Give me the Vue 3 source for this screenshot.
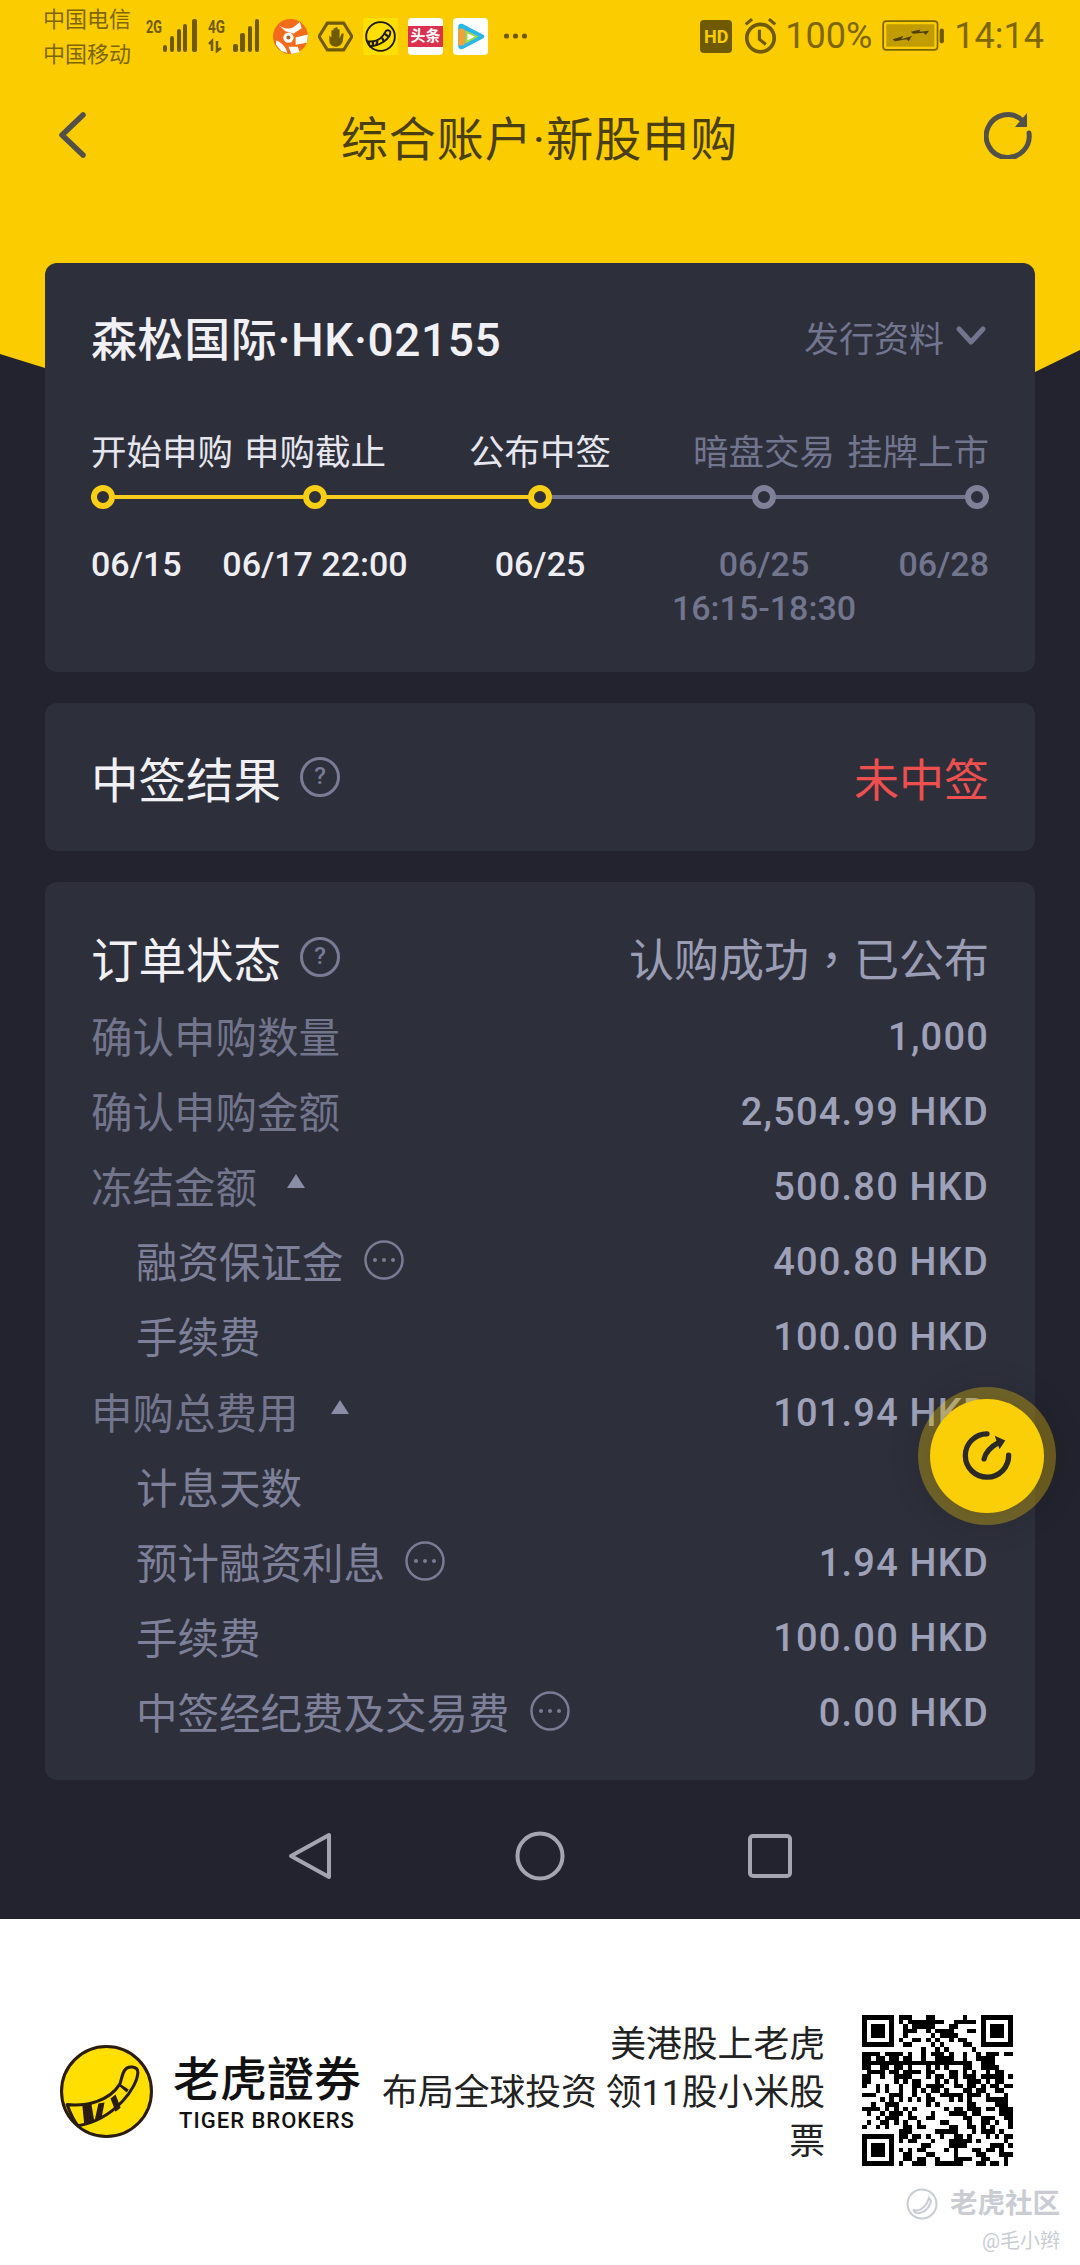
<template>
  <div class="page">
    <div class="hero-bg"></div>

    <div class="status-bar">
      <div class="carrier">
        <div>中国电信</div>
        <div>中国移动</div>
      </div>
      <svg class="signal" width="118" height="40" viewBox="0 0 114 40">
        <text x="0" y="17" class="net" textLength="16" lengthAdjust="spacingAndGlyphs">2G</text>
        <g fill="#6f5a00">
          <rect x="17" y="29" width="4" height="7" rx="2" />
          <rect x="24" y="20" width="4" height="16" rx="2" />
          <rect x="31" y="13" width="4" height="23" rx="2" />
          <rect x="37" y="8" width="4" height="28" rx="2" />
          <rect x="46" y="3" width="5" height="33" rx="2" />
        </g>
        <text x="62" y="17" class="net" textLength="17" lengthAdjust="spacingAndGlyphs">4G</text>
        <path d="M66 35V25l-3 3M71 25v10l4-3" fill="none" stroke="#6f5a00" stroke-width="2.5" />
        <g fill="#6f5a00">
          <rect x="87" y="28" width="5" height="8" rx="2" />
          <rect x="94" y="17" width="5" height="19" rx="2" />
          <rect x="102" y="10" width="4" height="26" rx="2" />
          <rect x="109" y="3" width="4" height="33" rx="2" />
        </g>
      </svg>
      <div class="apps">
        <svg width="35" height="37" viewBox="0 0 34 36">
          <circle cx="17" cy="18" r="17" fill="#f26a1b" />
          <path d="M6 7c5 4 9 4 14 2l6-5 2 6-8 5-8-2zM3 22c6 2 9 6 11 12l-6-2-5-6zM22 19l12-3-1 8-11 2zM15 28l9 0 2 5-8 2z" fill="#fff" />
          <circle cx="15" cy="19" r="5" fill="#fff" />
          <circle cx="15" cy="19" r="2" fill="#a8622e" />
        </svg>
        <svg width="35" height="37" viewBox="0 0 34 36">
          <path d="M9 5h16l8 13-8 13H9L1 18z" fill="none" stroke="#6f5a00" stroke-width="3" />
          <path d="M11 17v5c0 4 3 6 6 6s6-2 7-5l1-8-2 0-2 5v-9h-2v7-9h-2v9-8h-2v8-6h-2v7z" fill="#6f5a00" />
        </svg>
        <svg width="35" height="37" viewBox="0 0 92 98">
          <rect width="92" height="98" fill="#ffdf00" />
          <circle cx="46" cy="49" r="38" fill="none" stroke="#1f1a10" stroke-width="5" />
          <path d="M14 62c18 2 36-6 45-26 2-5 12-5 13 1 1 16-26 37-54 38z" fill="#ffdf00" stroke="#1f1a10" stroke-width="5" />
          <path d="M26 63v12M38 60l-3 12M50 52l6 12M58 42l8 7" stroke="#1f1a10" stroke-width="6" />
        </svg>
        <div class="toutiao"><span>头条</span></div>
        <svg class="video" width="35" height="37" viewBox="0 0 34 36">
          <rect width="34" height="36" rx="4" fill="#fff" />
          <path d="M5 9c0-3 2-4 5-3l19 10c2 1 2 3 0 4L10 30c-3 1-5 0-5-3z" fill="#2ab7e8" />
          <path d="M5 11c4-2 7 0 7 3v9c0 3-3 5-7 3z" fill="#f2a23a" />
          <path d="M12 12l13 6-13 7z" fill="#9fd84a" />
          <path d="M14 15l7 3-7 4z" fill="#fff" />
        </svg>
        <svg width="25" height="36" viewBox="0 0 24 36">
          <g fill="#6f5a00">
            <circle cx="3" cy="18" r="2.6" />
            <circle cx="12" cy="18" r="2.6" />
            <circle cx="21" cy="18" r="2.6" />
          </g>
        </svg>
      </div>
      <div class="sys">
        <div class="hd">HD</div>
        <svg width="35" height="38" viewBox="0 0 32 36">
          <circle cx="16" cy="20" r="13" fill="none" stroke="#6f5a00" stroke-width="3.5" />
          <path d="M15 12v9l6 5" fill="none" stroke="#6f5a00" stroke-width="3" />
          <path d="M2 7l6-5M30 7l-6-5" stroke="#6f5a00" stroke-width="3" />
        </svg>
        <span class="pct">100%</span>
        <svg width="62" height="32" viewBox="0 0 58 30">
          <rect x="1" y="1" width="51" height="27" rx="3" fill="none" stroke="#7d6600" stroke-width="1.6" />
          <rect x="4" y="4" width="45" height="21" fill="#c09c00" />
          <path d="M10 18l10-3-2 3 10-3-3 5-2-2-11 2zM27 11l9-2-1 2 9-1-3 4-2-2-10 1z" fill="#4d3f00" />
          <rect x="54" y="8" width="4" height="14" rx="2" fill="#6f5a00" />
        </svg>
        <span class="clock">14:14</span>
      </div>
    </div>

    <div class="top-bar">
      <svg class="back" width="30" height="48" viewBox="0 0 30 48">
        <path d="M26 4L5 24l21 20" fill="none" stroke="#52504a" stroke-width="5.5" stroke-linecap="round" stroke-linejoin="round" />
      </svg>
      <div class="top-title">综合账户·新股申购</div>
      <svg class="reload" width="48" height="48" viewBox="0 0 48 48">
        <path d="M38 9A21.500 21.500 0 1 0 45 22" fill="none" stroke="#52504a" stroke-width="5" stroke-linecap="round" />
        <path d="M43 2v14H31z" fill="#52504a" />
      </svg>
    </div>

    <section class="card schedule">
      <div class="schedule-head">
        <div class="stock">森松国际·HK·02155</div>
        <div class="more">
          发行资料
          <svg width="30" height="20" viewBox="0 0 30 20">
            <path d="M3 3l12 13L27 3" fill="none" stroke="#72758e" stroke-width="5" stroke-linecap="round" stroke-linejoin="round" />
          </svg>
        </div>
      </div>
      <div class="steps">
        <div v-for="s in steps" :key="s.label" class="step-label" :class="[s.align, { off: !s.on }]">{{ s.label }}</div>
      </div>
      <div class="steps track">
        <div v-for="s in steps" :key="s.label" class="dot" :class="[s.align, { off: !s.on }]"></div>
      </div>
      <div class="steps dates">
        <div v-for="s in steps" :key="s.label" class="step-date" :class="[s.align, { off: !s.on }]">
          <div v-for="d in s.dates" :key="d">{{ d }}</div>
        </div>
      </div>
    </section>

    <section class="card result">
      <div class="head-left">
        <span class="head-title">中签结果</span>
        <span class="help">?</span>
      </div>
      <span class="lost">未中签</span>
    </section>

    <section class="card order">
      <div class="order-head">
        <div class="head-left">
          <span class="head-title">订单状态</span>
          <span class="help">?</span>
        </div>
        <span class="order-state">认购成功<span class="comma">，</span>已公布</span>
      </div>
      <div v-for="r in rows" :key="r.label + r.value" class="row" :class="{ child: r.child }">
        <div class="row-label">
          <span>{{ r.label }}</span>
          <span v-if="r.caret" class="caret" :style="{ marginLeft: r.caret + 'px' }"></span>
          <svg v-if="r.more" class="more-dots" width="40" height="40" viewBox="0 0 40 40">
            <circle cx="20" cy="20" r="18.500" fill="none" stroke="#797c94" stroke-width="2.500" />
            <circle cx="11" cy="20" r="2" fill="#797c94" />
            <circle cx="20" cy="20" r="2" fill="#797c94" />
            <circle cx="29" cy="20" r="2" fill="#797c94" />
          </svg>
        </div>
        <div class="row-value">{{ r.value }}</div>
      </div>
    </section>

    <div class="fab">
      <svg width="52" height="52" viewBox="0 0 54 54">
        <path d="M27 4A22.500 22.500 0 1 0 49.500 26" fill="none" stroke="#2b2a26" stroke-width="5.500" stroke-linecap="round" />
        <path d="M24 30c1-6 7-13 15-17" fill="none" stroke="#2b2a26" stroke-width="5.500" stroke-linecap="round" />
        <path d="M35 6l11 5-6 9z" fill="#2b2a26" />
      </svg>
    </div>

    <div class="nav-bar">
      <svg width="46" height="50" viewBox="0 0 46 50">
        <path d="M42 4v42L4 25z" fill="none" stroke="#a3a5b0" stroke-width="4" stroke-linejoin="round" />
      </svg>
      <svg width="50" height="50" viewBox="0 0 50 50">
        <circle cx="25" cy="25" r="22.500" fill="none" stroke="#a3a5b0" stroke-width="4" />
      </svg>
      <svg width="46" height="46" viewBox="0 0 46 46">
        <rect x="3" y="3" width="40" height="40" rx="3" fill="none" stroke="#a3a5b0" stroke-width="4" />
      </svg>
    </div>

    <footer class="promo">
      <svg class="logo" width="97" height="97" viewBox="0 0 92 96">
        <circle cx="46" cy="47" r="44.500" fill="#ffdf00" stroke="#2a1d10" stroke-width="3" />
        <path d="M7 60c20 2 42-4 52-20 2-4 2-10 5-14 3-5 13-4 13 2 0 14-22 46-59 53-4-4-8-13-11-21z" fill="#ffdf00" stroke="#2a1d10" stroke-width="3" stroke-linejoin="round" />
        <path d="M22 60l2 20 10-3-3-18zM38 59l-4 18 7-3 3-16zM50 54l5 13 5-4-5-13zM58 41l8 7 2-3-9-6z" fill="#2a1d10" />
      </svg>
      <div class="brand">
        <div class="brand-cn">老虎證券</div>
        <div class="brand-en">TIGER BROKERS</div>
      </div>
      <div class="slogan">美港股上老虎<br />布局全球投资 领11股小米股<br />票</div>
      <svg class="qr" width="151" height="151" viewBox="0 0 33 33" shape-rendering="crispEdges">
        <path :d="qrPath" fill="#000" />
      </svg>
      <div class="watermark">
        <div class="wm-top">
          <svg width="32" height="32" viewBox="0 0 32 32">
            <circle cx="16" cy="16" r="14.500" fill="none" stroke="#c9ccd2" stroke-width="2" />
            <path d="M7 22c6 2 13-2 16-12l2 3c-2 8-8 13-15 12z" fill="none" stroke="#c9ccd2" stroke-width="2" />
          </svg>
          <span>老虎社区</span>
        </div>
        <div class="wm-user">@毛小辫</div>
      </div>
    </footer>
  </div>
</template>

<script setup>
const steps = [
  { label: '开始申购', dates: ['06/15'], on: true, align: 'start' },
  { label: '申购截止', dates: ['06/17 22:00'], on: true, align: 'mid' },
  { label: '公布中签', dates: ['06/25'], on: true, align: 'mid' },
  { label: '暗盘交易', dates: ['06/25', '16:15-18:30'], on: false, align: 'mid' },
  { label: '挂牌上市', dates: ['06/28'], on: false, align: 'end' }
]

const rows = [
  { label: '确认申购数量', value: '1,000' },
  { label: '确认申购金额', value: '2,504.99 HKD' },
  { label: '冻结金额', value: '500.80 HKD', caret: 30 },
  { label: '融资保证金', value: '400.80 HKD', child: true, more: true },
  { label: '手续费', value: '100.00 HKD', child: true },
  { label: '申购总费用', value: '101.94 HKD', caret: 32 },
  { label: '计息天数', value: '', child: true },
  { label: '预计融资利息', value: '1.94 HKD', child: true, more: true },
  { label: '手续费', value: '100.00 HKD', child: true },
  { label: '中签经纪费及交易费', value: '0.00 HKD', child: true, more: true }
]

// QR code pattern, seeded so every run draws the same modules
const qrPath = (() => {
  const size = 33
  let seed = 2155
  const next = () => {
    seed = (seed * 1103515245 + 12345) & 0x7fffffff
    return (seed >> 16) & 1
  }
  const inFinder = (x, y, ox, oy) => x >= ox && x < ox + 8 && y >= oy && y < oy + 8
  let d = ''
  for (let y = 0; y < size; y++) {
    for (let x = 0; x < size; x++) {
      if (inFinder(x, y, 0, 0) || inFinder(x, y, size - 8, 0) || inFinder(x, y, 0, size - 8)) {
        next()
        continue
      }
      if (next()) d += `M${x} ${y}h1v1h-1z`
    }
  }
  for (const [ox, oy] of [[0, 0], [size - 7, 0], [0, size - 7]]) {
    d += `M${ox} ${oy}h7v7h-7zM${ox + 1} ${oy + 1}v5h5v-5zM${ox + 2} ${oy + 2}h3v3h-3z`
  }
  return d
})()
</script>

<style>
html,
body {
  margin: 0;
  background: #22232e;
}
</style>

<style scoped>
.page {
  position: relative;
  width: 1080px;
  height: 2265px;
  overflow: hidden;
  background: #22232e;
  color: #eeeef4;
  font-family: Roboto, "Noto Sans CJK SC", sans-serif;
  display: flex;
  flex-direction: column;
}

.hero-bg {
  position: absolute;
  top: 0;
  left: 0;
  width: 1080px;
  height: 520px;
  background: #fbcd00;
  clip-path: polygon(0 0, 100% 0, 100% 350px, 1035px 372px, 540px 510px, 45px 368px, 0 354px);
}

.status-bar {
  position: relative;
  height: 72px;
  display: flex;
  align-items: center;
  padding: 0 36px 0 43px;
  color: #7d6600;
}

.carrier {
  width: 101px;
  font-size: 22px;
  line-height: 35px;
  padding-top: 2px;
}

.net {
  font-family: "Roboto", sans-serif;
  font-size: 19px;
  font-weight: 700;
  fill: #6f5a00;
}

.signal {
  flex: none;
}

.apps {
  display: flex;
  align-items: center;
  gap: 10px;
  margin-left: 11px;
}

.video {
  margin-right: 5px;
}

.toutiao {
  width: 35px;
  height: 37px;
  background: #fff;
  border-radius: 4px;
  display: flex;
  align-items: center;
}

.toutiao span {
  flex: 1;
  height: 21px;
  background: #d9314f;
  color: #fff;
  font-size: 15px;
  line-height: 21px;
  font-weight: 700;
  text-align: center;
  white-space: nowrap;
}

.sys {
  margin-left: auto;
  display: flex;
  align-items: center;
}

.hd {
  width: 32px;
  height: 33px;
  background: #6f5a00;
  border-radius: 4px;
  color: #fbcd00;
  font-size: 18px;
  font-weight: 700;
  line-height: 33px;
  text-align: center;
  margin-right: 11px;
}

.pct {
  font-size: 36px;
  margin: 0 10px 0 7px;
}

.clock {
  font-size: 36px;
  margin-left: 10px;
}

.top-bar {
  position: relative;
  height: 126px;
  margin-bottom: 65px;
  padding: 0 48px 0 57px;
  display: flex;
  align-items: center;
  justify-content: space-between;
  box-sizing: border-box;
}

.back {
  flex: none;
  margin-right: 8px;
}

.reload {
  flex: none;
}

.top-title {
  font-size: 47px;
  color: #4a3f10;
  letter-spacing: 1px;
}

.card {
  position: relative;
  margin: 0 45px;
  background: #2d2f3b;
  border-radius: 12px;
  box-sizing: border-box;
}

.schedule {
  height: 409px;
  padding: 41px 46px 0;
  margin-bottom: 31px;
}

.schedule-head {
  display: flex;
  justify-content: space-between;
  align-items: center;
  height: 64px;
  margin-bottom: 61px;
}

.stock {
  font-size: 46px;
  font-weight: 500;
  color: #f0f0f5;
  letter-spacing: 0.6px;
}

.more {
  display: flex;
  align-items: center;
  gap: 12px;
  font-size: 35px;
  color: #72758e;
  margin-right: 3px;
}

.steps {
  display: grid;
  grid-template-columns: 118px 212px 238px 210px 120px;
}

.step-label {
  font-size: 35.500px;
  line-height: 48px;
  white-space: nowrap;
  color: #e6e6ee;
}

.step-label.off,
.step-date.off {
  color: #72758e;
}

.start {
  justify-self: start;
  text-align: left;
}

.mid {
  justify-self: center;
  text-align: center;
}

.end {
  justify-self: end;
  text-align: right;
}

.track {
  height: 26px;
  margin-top: 7px;
  background: linear-gradient(to right, #f5cb1e 449px, #71748d 449px) no-repeat center / 100% 4px;
}

.dot {
  width: 24px;
  height: 24px;
  margin-top: 1px;
  box-sizing: border-box;
  border: 6px solid #f9cf16;
  border-radius: 50%;
  background: #2d2f3b;
}

.dot.off {
  border-color: #7f8199;
}

.dates {
  margin-top: 32px;
}

.step-date {
  font-size: 34px;
  font-weight: 500;
  line-height: 44px;
  white-space: nowrap;
  color: #eeeef4;
}

.result {
  height: 148px;
  margin-bottom: 31px;
  padding: 0 46px;
  display: flex;
  align-items: center;
  justify-content: space-between;
}

.head-left {
  display: flex;
  align-items: center;
}

.head-title {
  font-size: 47.500px;
  color: #f0f0f5;
}

.help {
  width: 40px;
  height: 40px;
  margin-left: 19px;
  box-sizing: border-box;
  border: 3px solid #797c94;
  border-radius: 50%;
  font-size: 24px;
  font-weight: 500;
  line-height: 33px;
  text-align: center;
  color: #797c94;
}

.lost {
  font-size: 45px;
  color: #ee4f4f;
}

.order {
  height: 898px;
  padding: 43px 46px 0;
}

.order-head {
  display: flex;
  justify-content: space-between;
  align-items: center;
  height: 64px;
  margin-bottom: 8px;
}

.order-state {
  font-size: 45px;
  color: #9a9db3;
}

.comma {
  font-family: "Noto Sans CJK TC", sans-serif;
}

.row {
  height: 75.200px;
  display: flex;
  align-items: center;
  justify-content: space-between;
}

.row.child .row-label {
  padding-left: 45px;
  color: #7d8098;
}

.row-label {
  display: flex;
  align-items: center;
  font-size: 41.500px;
  color: #72758c;
  white-space: nowrap;
}

.row-value {
  font-size: 38px;
  font-weight: 500;
  color: #9ea1b8;
  letter-spacing: 1.200px;
  padding-top: 4px;
}

.caret {
  width: 0;
  height: 0;
  border-left: 9px solid transparent;
  border-right: 9px solid transparent;
  border-bottom: 14px solid #8a8da6;
  margin-bottom: 8px;
}

.more-dots {
  margin-left: 20px;
}

.fab {
  position: absolute;
  left: 930px;
  top: 1399px;
  width: 114px;
  height: 114px;
  border-radius: 50%;
  background: #fbcf07;
  box-shadow: 0 0 0 12px rgba(251, 207, 7, 0.32), 0 0 30px 14px rgba(0, 0, 0, 0.12);
  display: flex;
  align-items: center;
  justify-content: center;
}

.nav-bar {
  height: 139px;
  padding-top: 13px;
  box-sizing: border-box;
  display: flex;
  align-items: center;
  justify-content: center;
  gap: 182px;
}

.promo {
  position: relative;
  flex: 1;
  background: #fff;
  display: flex;
  align-items: center;
  padding: 0 67px 0 58px;
  color: #222;
}

.logo {
  flex: none;
}

.brand {
  margin-left: 17px;
  margin-top: 0;
  width: 190px;
  flex: none;
  text-align: center;
  color: #111;
}

.brand-cn {
  font-size: 47px;
  line-height: 58px;
  font-weight: 500;
  white-space: nowrap;
}

.brand-en {
  font-size: 22px;
  line-height: 24px;
  font-weight: 500;
  letter-spacing: 1px;
  white-space: nowrap;
}

.slogan {
  margin-left: auto;
  margin-top: 3px;
  font-size: 35.800px;
  line-height: 48.500px;
  text-align: right;
  white-space: nowrap;
}

.qr {
  flex: none;
  margin-left: 37px;
  margin-top: -3px;
}

.watermark {
  position: absolute;
  right: 20px;
  bottom: 9px;
  color: #c9ccd2;
  text-align: right;
}

.wm-top {
  display: flex;
  align-items: center;
  justify-content: flex-end;
  gap: 12px;
  font-size: 27.500px;
  line-height: 44px;
  font-weight: 700;
}

.wm-user {
  font-size: 20px;
  line-height: 30px;
}
</style>
